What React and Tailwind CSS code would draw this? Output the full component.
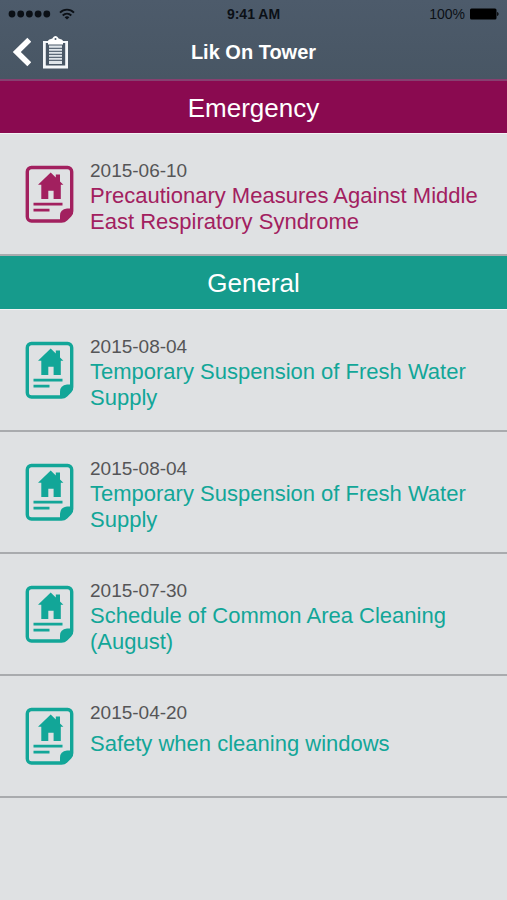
const sections = [
    {
        title: "Emergency",
        band: "h-[53px] bg-[#8a0a50]",
        color: "text-[#a2205f]",
        notices: [
            {
                id: 1,
                date: "2015-06-10",
                text: "Precautionary Measures Against Middle East Respiratory Syndrome",
            },
        ],
    },
    {
        title: "General",
        band: "h-[54px] bg-[#169b8c]",
        color: "text-[#12a698]",
        notices: [
            { id: 2, date: "2015-08-04", text: "Temporary Suspension of Fresh Water Supply" },
            { id: 3, date: "2015-08-04", text: "Temporary Suspension of Fresh Water Supply" },
            { id: 4, date: "2015-07-30", text: "Schedule of Common Area Cleaning (August)" },
            { id: 5, date: "2015-04-20", text: "Safety when cleaning windows" },
        ],
    },
];

const App = () => {
    return (
        <div className="min-h-screen bg-[#dfe1e3] font-['Liberation_Sans',Arial,sans-serif]">
            <header className="border-b-2 border-[#874070] bg-linear-to-b from-[#4d5b6b] to-[#485664]">
                <StatusBar />
                <NavBar title="Lik On Tower" />
            </header>

            <main>
                {sections.map((section) => (
                    <section key={section.title}>
                        <h2
                            className={`flex items-center justify-center border-b border-white/60 bg-clip-padding pt-0.5 text-[26px] text-white ${section.band}`}
                        >
                            {section.title}
                        </h2>
                        <ul>
                            {section.notices.map((notice) => (
                                <Notice key={notice.id} notice={notice} color={section.color} />
                            ))}
                        </ul>
                    </section>
                ))}
            </main>
        </div>
    );
};

const StatusBar = () => (
    <div className="grid h-7 grid-cols-3 items-center px-2 text-[14px] text-[#0b1016]">
        <div className="flex items-center gap-2">
            <svg viewBox="0 0 43 8" className="h-2 w-[43px]" fill="currentColor" aria-label="Signal">
                <circle cx="4" cy="4" r="3.4" />
                <circle cx="12.7" cy="4" r="3.4" />
                <circle cx="21.4" cy="4" r="3.4" />
                <circle cx="30.1" cy="4" r="3.4" />
                <circle cx="38.8" cy="4" r="3.4" />
            </svg>
            <svg viewBox="0 0 16 12" className="h-3 w-4" fill="none" stroke="currentColor" strokeWidth="1.9" aria-label="Wi-Fi">
                <path d="M1 4.6C5 .6 11 .6 15 4.6" />
                <path d="M3.7 7.5c2.5-2.4 6.1-2.4 8.6 0" />
                <path d="M8 11.6 5.6 9.3c1.4-1.3 3.4-1.3 4.8 0z" fill="currentColor" stroke="none" />
            </svg>
        </div>
        <span className="text-center font-bold">9:41 AM</span>
        <div className="flex items-center justify-end gap-1">
            <span>100%</span>
            <svg viewBox="0 0 30 12" className="h-3 w-[30px]" fill="#000" aria-label="Battery">
                <rect x="1" y="0.5" width="26.5" height="11" rx="1.5" />
                <path d="M28.2 4c1.8.5 1.8 3.5 0 4z" />
            </svg>
        </div>
    </div>
);

const NavBar = ({ title }) => (
    <div className="grid h-[51px] grid-cols-[1fr_auto_1fr] items-center px-3 pb-[3px]">
        <div className="flex items-center gap-3 text-white">
            <button type="button" aria-label="Back">
                <svg viewBox="0 0 19 30" className="h-[30px] w-[19px]" fill="none" stroke="currentColor" strokeWidth="5.6">
                    <path d="M17.3 2.8 4.8 15l12.5 12.2" />
                </svg>
            </button>
            <button type="button" aria-label="Notices">
                <svg viewBox="0 0 25 33" className="h-[33px] w-[25px]">
                    <path d="M1.4 5v26h22.2V5" fill="none" stroke="#f4f7fa" strokeWidth="2.8" />
                    <path d="M0 5h5v2H0zM20 5h5v2h-5z" fill="#f4f7fa" />
                    <path d="M6 9.5h13V28H6z" fill="#dfe5ea" />
                    <path d="M6 12.3h13M6 15.3h13M6 18.3h13M6 21.3h13M6 24.3h13" stroke="#5d6a78" strokeWidth="1.2" />
                    <path d="M5 8.6V5.2c0-1 1-1.6 2.2-1.9L9.4 2.6C10.2.9 11.2 0 12.5 0s2.3.9 3.1 2.6l2.200.7C19 3.6 20 4.2 20 5.2v3.4z" fill="#fff" />
                    <circle cx="12.5" cy="3" r="1" fill="#4b5968" />
                </svg>
            </button>
        </div>
        <h1 className="text-[20px] font-bold text-white">{title}</h1>
    </div>
);

const Notice = ({ notice, color }) => (
    <li className="border-b-2 border-[#a9abae]">
        <a href="#" className={`flex h-[120px] gap-4 pt-[25px] pr-4 pl-[25px] ${color}`}>
            <NoticeIcon />
            <div className="flex-1">
                <time className="block text-[19px] leading-[24px] text-[#555557]">{notice.date}</time>
                <p className="flex min-h-[38px] items-center text-[22px] leading-[26px]">{notice.text}</p>
            </div>
        </a>
    </li>
);

const NoticeIcon = () => (
    <svg viewBox="0 0 49 58" className="mt-[6px] h-[58px] w-[49px] shrink-0" fill="currentColor">
        {/* page with folded corner */}
        <path
            d="M6.500 2.500h36A4.300 4.300 0 0 1 46.700 6.800V46Q46.700 48.500 45 50.200L41 54.200Q39.200 56 36.500 56H6.500A4.200 4.200 0 0 1 2.300 51.800v-45A4.200 4.200 0 0 1 6.500 2.500z"
            fill="none"
            stroke="currentColor"
            strokeWidth="3.400"
        />
        <path d="M48 43.5H42Q35 44.500 35 50.500V57h4.500L48 48.500z" />
        {/* house */}
        <path d="M25.700 7.500 13 19.800h3.300V34h7v-8.300h5.300V34h7.200V19.800h2.600L35 16.500V9.500h-4.200v3z" />
        {/* text lines */}
        <path d="M8.500 37.700h29v2.800h-29zM8.500 43.800h16v2.700h-16z" />
    </svg>
);

export default App;
